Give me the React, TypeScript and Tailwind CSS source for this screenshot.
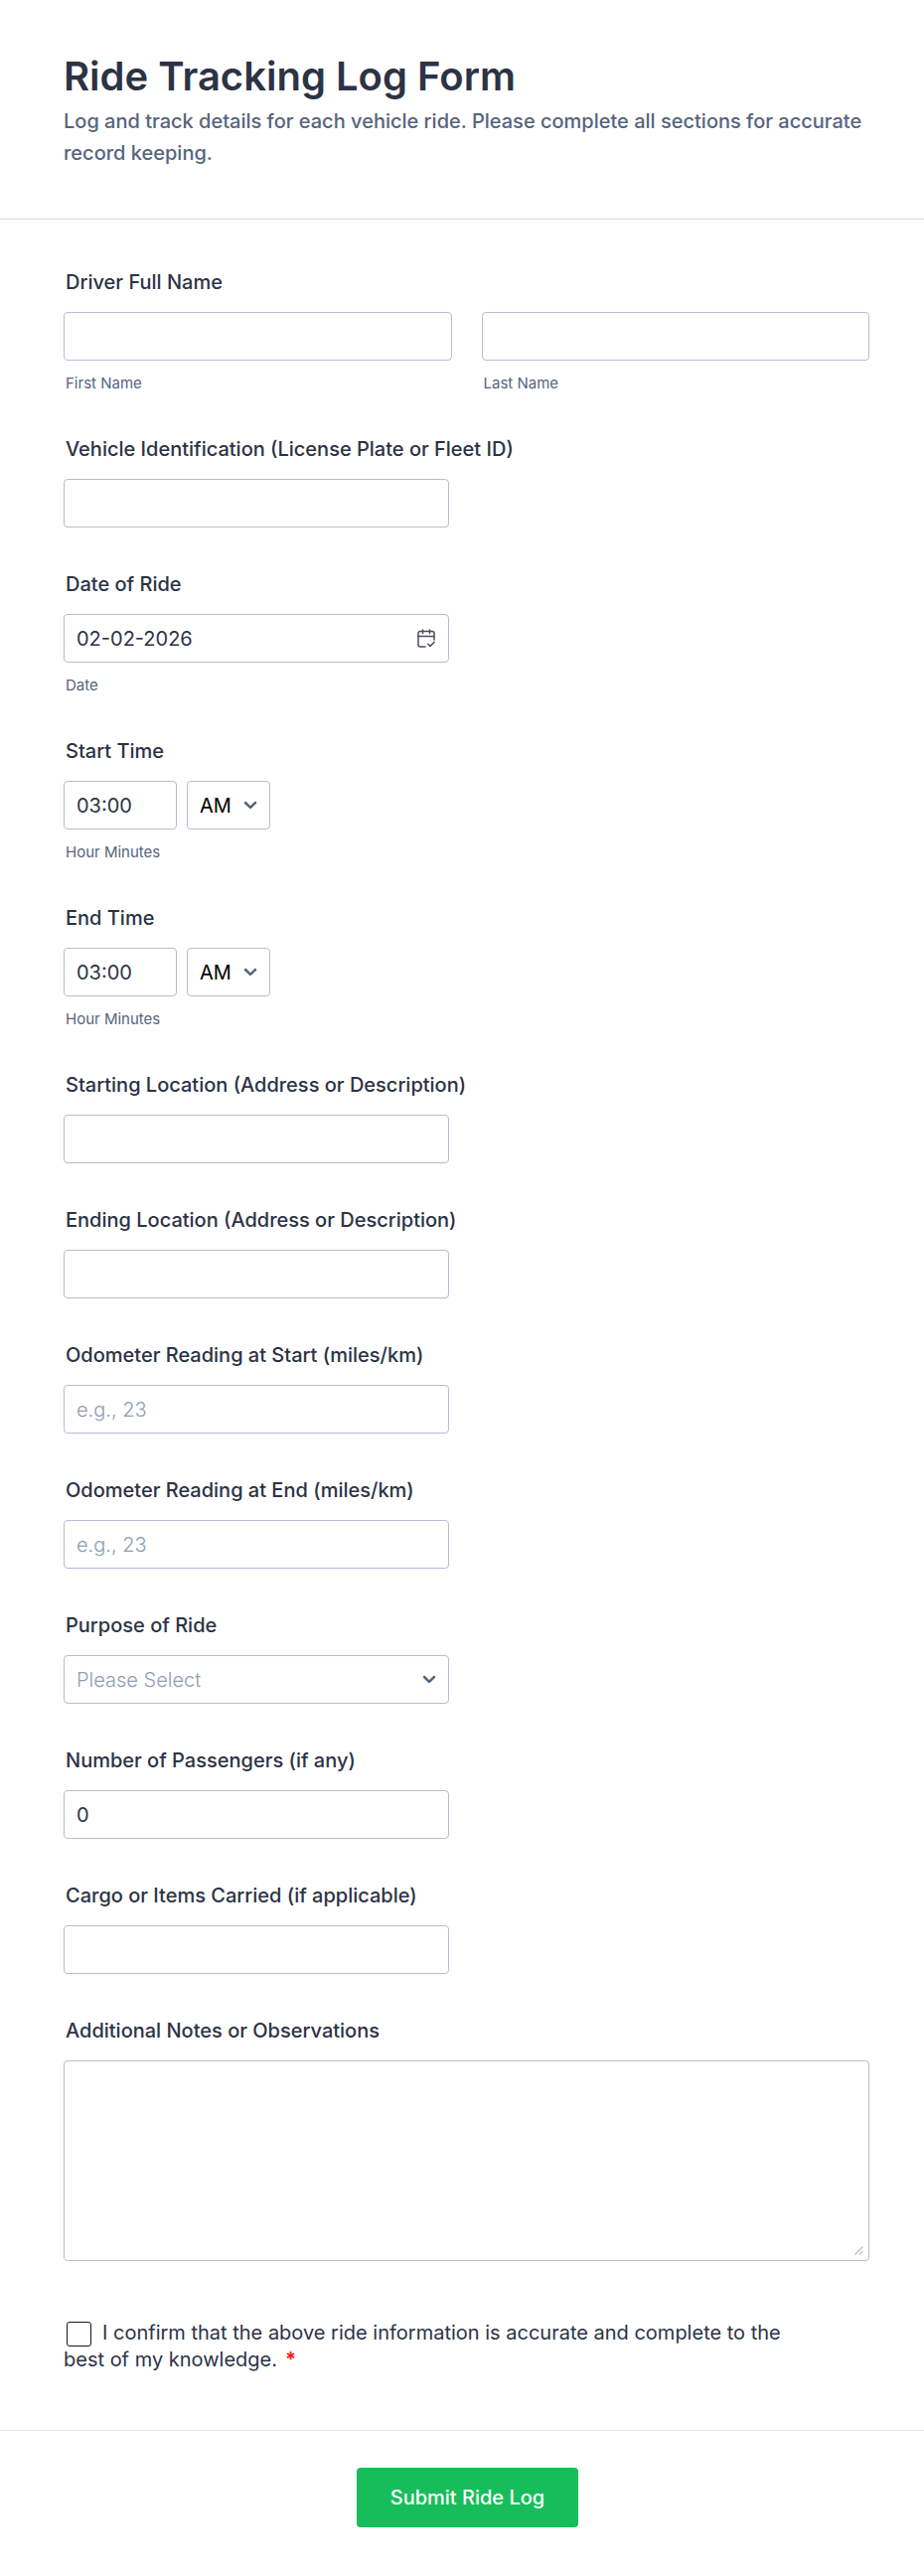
import { useState, type InputHTMLAttributes, type ReactNode } from "react";

const control =
  "h-[49px] rounded border border-[#b8bdcf] bg-white px-3 text-xl text-[#2c3345] placeholder:font-light placeholder:text-[#8d9eb3] outline-none focus:border-blue-500";

function Label({ htmlFor, children }: { htmlFor: string; children: ReactNode }) {
  return (
    <label
      htmlFor={htmlFor}
      className="block pl-[2px] text-xl leading-6 font-medium text-[#2c3345]"
    >
      {children}
    </label>
  );
}

function SubLabel({ htmlFor, children }: { htmlFor: string; children: ReactNode }) {
  return (
    <label
      htmlFor={htmlFor}
      className="block pt-[13px] pl-[2px] text-[15px] leading-[19px] text-[#57647e]"
    >
      {children}
    </label>
  );
}

function Chevron({ className }: { className: string }) {
  return (
    <svg
      viewBox="0 0 14 9"
      fill="none"
      stroke="#57647e"
      strokeWidth="2.5"
      strokeLinecap="round"
      strokeLinejoin="round"
      className={`pointer-events-none absolute h-[9px] w-[14px] ${className}`}
    >
      <path d="M2 2l5 4.8L12 2" />
    </svg>
  );
}

function CalendarIcon() {
  return (
    <svg
      viewBox="0 0 18 19"
      fill="none"
      stroke="#4f4a61"
      strokeWidth="1.5"
      strokeLinecap="round"
      strokeLinejoin="round"
      className="h-[19px] w-[18px]"
    >
      <path d="M8 18H3a2 2 0 0 1-2-2V4.500a2 2 0 0 1 2-2h12a2 2 0 0 1 2 2V11" />
      <path d="M1 7.500h16M5.500 1v3.500M12.500 1v3.500" />
      <path d="M10.800 15.200l2.200 2.200 4.200-4.200" />
    </svg>
  );
}

function TextField({
  id,
  label,
  ...props
}: { id: string; label: string } & InputHTMLAttributes<HTMLInputElement>) {
  return (
    <div>
      <Label htmlFor={id}>{label}</Label>
      <input id={id} className={`${control} mt-[18px] block w-[388px] max-w-full`} {...props} />
    </div>
  );
}

function TimeField({ id, label }: { id: string; label: string }) {
  return (
    <div>
      <Label htmlFor={id}>{label}</Label>
      <div className="mt-[18px] flex gap-[10px]">
        <input id={id} defaultValue="03:00" className={`${control} w-[114px]`} />
        <div className="relative flex items-center">
          <select
            aria-label={`${label} AM/PM`}
            className="h-[49px] w-[84px] appearance-none rounded border border-[#b8bdcf] bg-white px-3 text-xl text-black outline-none"
          >
            <option>AM</option>
            <option>PM</option>
          </select>
          <Chevron className="right-[13px]" />
        </div>
      </div>
      <SubLabel htmlFor={id}>Hour Minutes</SubLabel>
    </div>
  );
}

export default function App() {
  const [purpose, setPurpose] = useState("");

  return (
    <form
      className="bg-white font-['Inter',sans-serif] text-[#2c3345]"
      onSubmit={(e) => e.preventDefault()}
    >
      <header className="border-b border-[#d4d5e2] pt-[50px] pr-[55px] pb-[50px] pl-16">
        <h1 className="pb-[2px] text-[40px] leading-[54px] font-semibold">
          Ride Tracking Log Form
        </h1>
        <p className="text-xl leading-8 font-medium text-[#57647e]">
          Log and track details for each vehicle ride. Please complete all sections for accurate
          record keeping.
        </p>
      </header>

      <div className="flex flex-col gap-[45px] pt-[51px] pr-[55px] pl-16">
        <div>
          <Label htmlFor="first-name">Driver Full Name</Label>
          <div className="mt-[18px] grid grid-cols-2 gap-[30px]">
            <div>
              <input id="first-name" className={`${control} block w-full`} />
              <SubLabel htmlFor="first-name">First Name</SubLabel>
            </div>
            <div>
              <input id="last-name" className={`${control} block w-full`} />
              <SubLabel htmlFor="last-name">Last Name</SubLabel>
            </div>
          </div>
        </div>

        <TextField id="vehicle" label="Vehicle Identification (License Plate or Fleet ID)" />

        <div>
          <Label htmlFor="ride-date">Date of Ride</Label>
          <div className="relative mt-[18px] flex w-[388px] max-w-full items-center">
            <input id="ride-date" defaultValue="02-02-2026" className={`${control} w-full`} />
            <button type="button" aria-label="Choose date" className="absolute right-[14px]">
              <CalendarIcon />
            </button>
          </div>
          <SubLabel htmlFor="ride-date">Date</SubLabel>
        </div>

        <TimeField id="start-time" label="Start Time" />
        <TimeField id="end-time" label="End Time" />

        <TextField id="start-location" label="Starting Location (Address or Description)" />
        <TextField id="end-location" label="Ending Location (Address or Description)" />
        <TextField
          id="odometer-start"
          label="Odometer Reading at Start (miles/km)"
          placeholder="e.g., 23"
        />
        <TextField
          id="odometer-end"
          label="Odometer Reading at End (miles/km)"
          placeholder="e.g., 23"
        />

        <div>
          <Label htmlFor="purpose">Purpose of Ride</Label>
          <div className="relative mt-[18px] flex w-[388px] max-w-full items-center">
            <select
              id="purpose"
              value={purpose}
              onChange={(e) => setPurpose(e.target.value)}
              className="h-[49px] w-full appearance-none rounded border border-[#b8bdcf] bg-white px-3 text-xl font-light text-[#8d9eb3] outline-none"
            >
              <option value="">Please Select</option>
              <option>Business</option>
              <option>Delivery</option>
              <option>Personal</option>
              <option>Other</option>
            </select>
            <Chevron className="right-[13px]" />
          </div>
        </div>

        <TextField id="passengers" label="Number of Passengers (if any)" defaultValue="0" />
        <TextField id="cargo" label="Cargo or Items Carried (if applicable)" />

        <div>
          <Label htmlFor="notes">Additional Notes or Observations</Label>
          <div className="relative mt-[18px]">
            <textarea
              id="notes"
              className="block h-[202px] w-full resize-none rounded border border-[#b8bdcf] bg-white p-3 text-xl outline-none"
            />
            <svg
              viewBox="0 0 9 9"
              stroke="#b8bdcf"
              strokeWidth="1.2"
              className="pointer-events-none absolute right-[6px] bottom-[6px] size-[9px]"
            >
              <path d="M0.500 8.500l8-8M4.800 8.500l3.700-3.700" />
            </svg>
          </div>
        </div>
      </div>

      <div className="pt-[59px] pr-[130px] pb-[57px] pl-16 text-xl leading-[27px]">
        <input
          id="confirm"
          type="checkbox"
          required
          className="mr-[11px] ml-[3px] size-[25px] appearance-none rounded-[3px] border border-[#1f1226] bg-white align-middle checked:bg-[#18bd5b]"
        />
        <label htmlFor="confirm">
          I confirm that the above ride information is accurate and complete to the best of my
          knowledge.
        </label>
        <span className="ml-2 font-bold text-[#ff1a1a]">*</span>
      </div>

      <footer className="flex justify-center border-t border-[#e6e6f0] pt-[37px] pr-[53px] pb-[49px] pl-16">
        <button
          type="submit"
          className="h-[60px] rounded bg-[#18bd5b] px-[34px] text-xl font-medium text-white"
        >
          Submit Ride Log
        </button>
      </footer>
    </form>
  );
}
